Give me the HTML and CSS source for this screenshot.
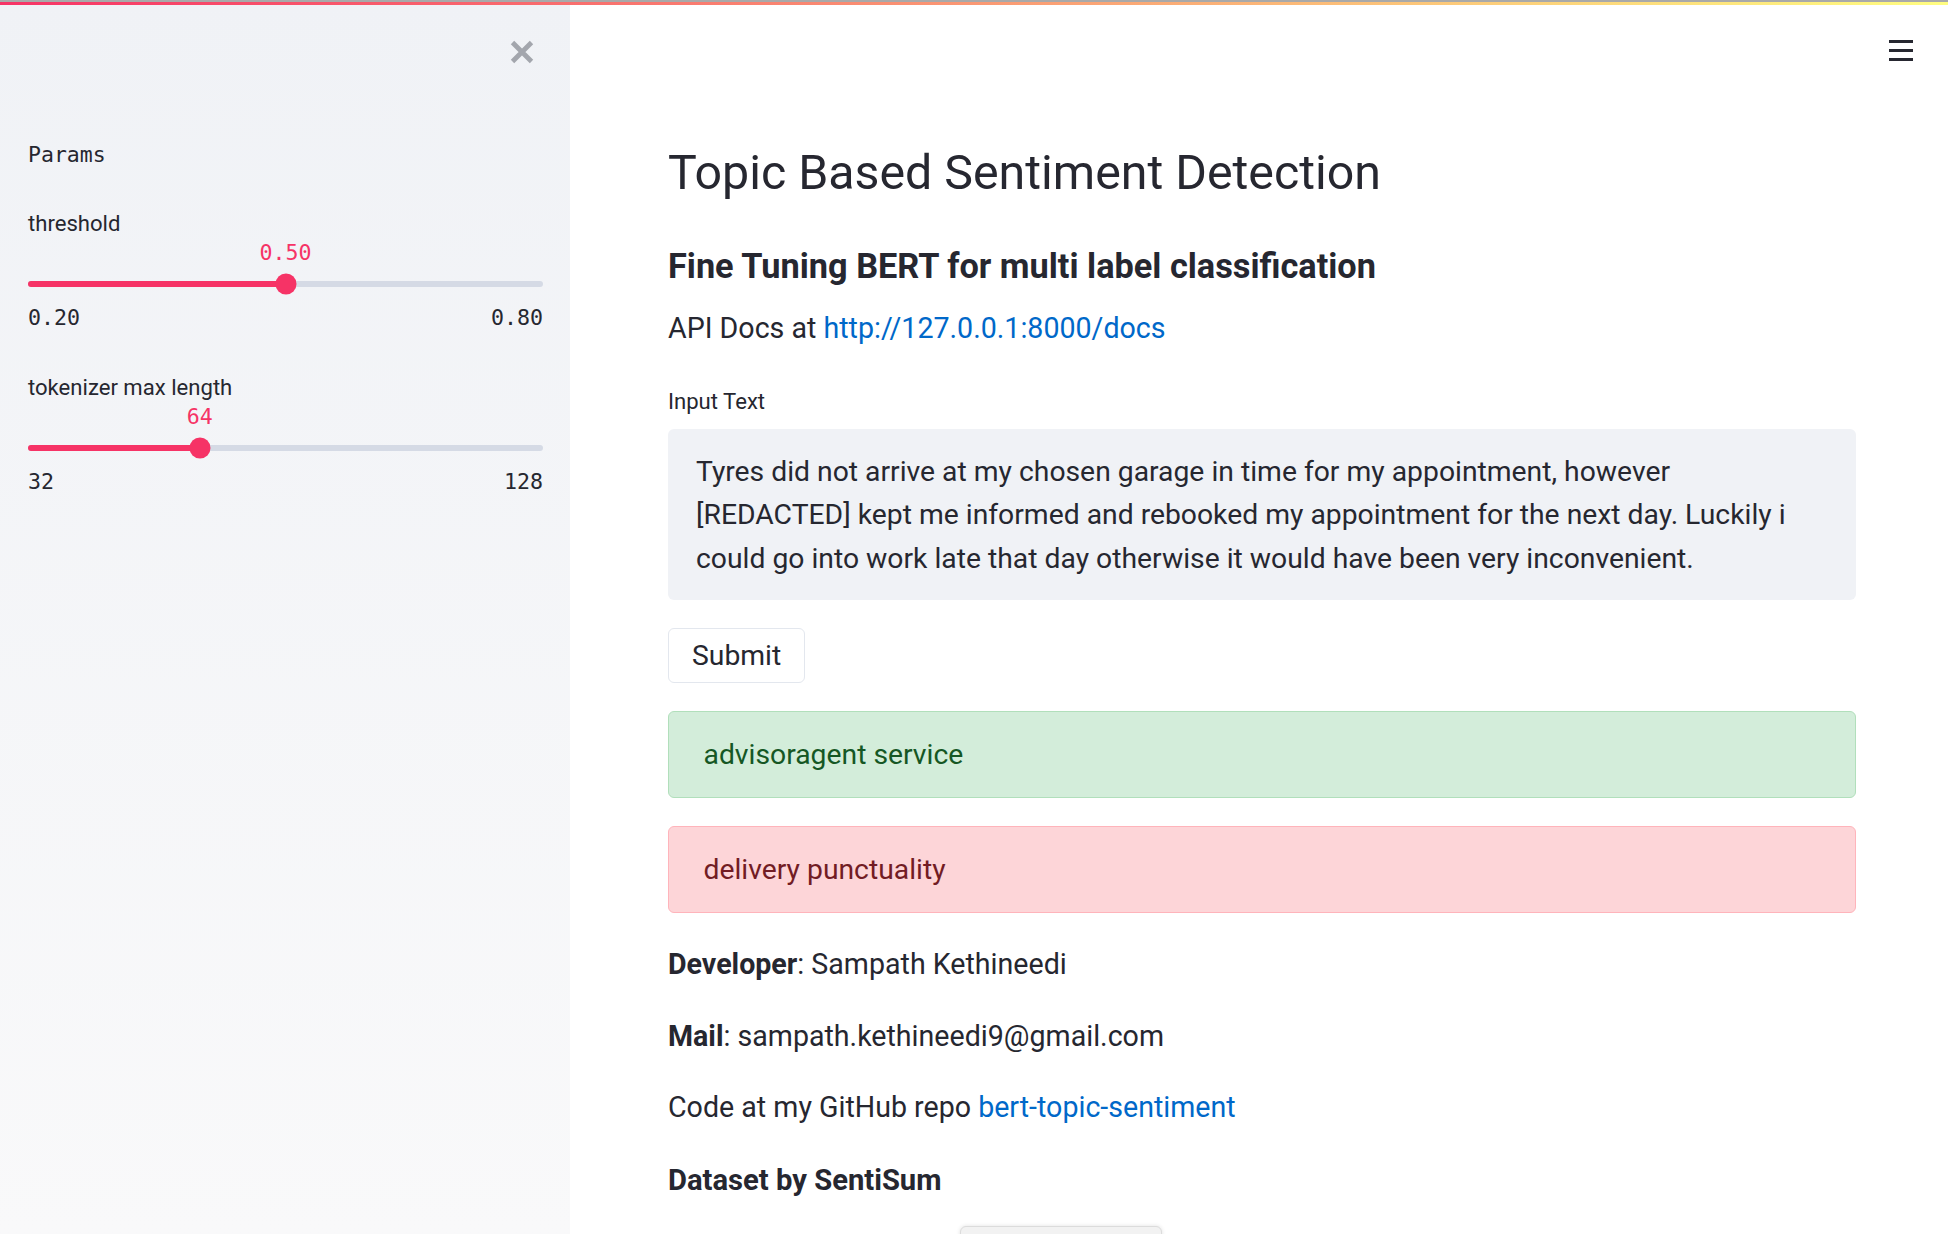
FILE: index.html
```html
<!DOCTYPE html>
<html lang="en">
<head>
<meta charset="utf-8">
<title>Topic Based Sentiment Detection</title>
<link rel="stylesheet" href="styles.css">
</head>
<body>
<div class="decoration"></div>
<div class="app">
  <aside class="sidebar">
    <button class="close" aria-label="Close sidebar">
      <svg viewBox="0 0 24 24" width="24" height="24"><path d="M2.5 2.5 L21.5 21.5 M21.5 2.5 L2.5 21.5" stroke="#a3a6ad" stroke-width="4.8" fill="none"/></svg>
    </button>
    <div class="params">Params</div>

    <div class="slider-group">
      <div class="slider-label">threshold</div>
      <div class="slider">
        <div class="slider-value-row"><span class="slider-value" style="left:50%">0.50</span></div>
        <div class="track"><div class="fill" style="width:50%"></div><div class="thumb" style="left:50%"></div></div>
        <div class="minmax"><span>0.20</span><span>0.80</span></div>
      </div>
    </div>

    <div class="slider-group">
      <div class="slider-label">tokenizer max length</div>
      <div class="slider">
        <div class="slider-value-row"><span class="slider-value" style="left:33.33%">64</span></div>
        <div class="track"><div class="fill" style="width:33.33%"></div><div class="thumb" style="left:33.33%"></div></div>
        <div class="minmax"><span>32</span><span>128</span></div>
      </div>
    </div>
  </aside>

  <main class="main">
    <button class="menu" aria-label="Menu">
      <svg viewBox="0 0 24 21" width="24" height="21"><rect x="0" y="0" width="24" height="3" fill="#262730"/><rect x="0" y="9" width="24" height="3" fill="#262730"/><rect x="0" y="18" width="24" height="3" fill="#262730"/></svg>
    </button>
    <div class="block">
      <h1 class="title">Topic Based Sentiment Detection</h1>
      <h3 class="subtitle">Fine Tuning BERT for multi label classification</h3>
      <p class="api">API Docs at <a href="#">http://127.0.0.1:8000/docs</a></p>
      <div class="field-label">Input Text</div>
      <div class="textarea">Tyres did not arrive at my chosen garage in time for my appointment, however<br>[REDACTED] kept me informed and rebooked my appointment for the next day. Luckily i<br>could go into work late that day otherwise it would have been very inconvenient.</div>
      <button class="submit">Submit</button>
      <div class="alert alert-success">advisoragent service</div>
      <div class="alert alert-error">delivery punctuality</div>
      <p class="para first"><strong>Developer</strong>: Sampath Kethineedi</p>
      <p class="para"><strong>Mail</strong>: sampath.kethineedi9@gmail.com</p>
      <p class="para">Code at my GitHub repo <a href="#">bert-topic-sentiment</a></p>
      <p class="para dataset"><strong>Dataset by SentiSum</strong></p>
      <div class="dataset-card"></div>
    </div>
  </main>
</div>
</body>
</html>
```
FILE: styles.css
```css
* { box-sizing: border-box; }

html, body {
  margin: 0;
  height: 100%;
  overflow: hidden;
}

body {
  font-family: Roboto, "Liberation Sans", sans-serif;
  color: #262730;
  background: #ffffff;
}

.decoration {
  position: fixed;
  top: 0;
  left: 0;
  right: 0;
  height: 5px;
  border-top: 2px solid #a9a9a9;
  background: linear-gradient(90deg, #f63366, #fffd80);
  z-index: 10;
}

.app {
  display: flex;
  height: 100vh;
}

/* ---------- Sidebar ---------- */
.sidebar {
  width: 570px;
  flex: none;
  position: relative;
  background: linear-gradient(180deg, #f0f2f6, #f9f9fa);
  padding: 139px 27px 0 28px;
}

.close {
  position: absolute;
  left: 510px;
  top: 40px;
  width: 24px;
  height: 24px;
  padding: 0;
  border: 0;
  background: none;
}

.close svg { display: block; }

.params {
  font-family: "DejaVu Sans Mono", "Liberation Mono", monospace;
  font-size: 21.5px;
  line-height: 32px;
  margin-bottom: 39px;
}

.slider-group + .slider-group { margin-top: 43.5px; }

.slider-label {
  font-size: 22.1px;
  line-height: 26.5px;
}

.slider { margin-top: 3.5px; }

.slider-value-row {
  position: relative;
  height: 26px;
}

.slider-value {
  position: absolute;
  top: 0;
  transform: translateX(-50%);
  font-family: "DejaVu Sans Mono", "Liberation Mono", monospace;
  font-size: 21.6px;
  line-height: 26px;
  color: #f63366;
}

.track {
  position: relative;
  margin-top: 14.5px;
  height: 6px;
  border-radius: 3px;
  background: #d5dae5;
}

.fill {
  height: 100%;
  border-radius: 3px;
  background: #f63366;
}

.thumb {
  position: absolute;
  top: 50%;
  width: 21px;
  height: 21px;
  border-radius: 50%;
  background: #f63366;
  transform: translate(-50%, -50%);
}

.minmax {
  display: flex;
  justify-content: space-between;
  margin-top: 18px;
  font-family: "DejaVu Sans Mono", "Liberation Mono", monospace;
  font-size: 21.6px;
  line-height: 26px;
}

/* ---------- Main ---------- */
.main {
  flex: 1;
  position: relative;
  padding: 143.5px 0 0 98px;
}

.menu {
  position: absolute;
  left: 1319px;
  top: 40px;
  width: 24px;
  height: 21px;
  padding: 0;
  border: 0;
  background: none;
}

.menu svg { display: block; }

.block { width: 1188px; }

.title {
  margin: 0;
  font-size: 48.3px;
  font-weight: 400;
  line-height: 58px;
}

.subtitle {
  margin: 44.5px 0 0;
  font-size: 34.3px;
  font-weight: 700;
  line-height: 41px;
}

.api {
  margin: 19.6px 0 0;
  font-size: 28.6px;
  line-height: 43.5px;
}

a {
  color: #0068c9;
  text-decoration: none;
}

.field-label {
  margin-top: 37.9px;
  font-size: 22.1px;
  line-height: 26.5px;
}

.textarea {
  margin-top: 14.5px;
  padding: 21px 28px 20px;
  background: #f0f2f6;
  border-radius: 6px;
  font-size: 28.3px;
  line-height: 43.5px;
  white-space: nowrap;
}

.submit {
  display: block;
  margin-top: 27.5px;
  padding: 4.75px 23px;
  border: 1px solid #e3e7ee;
  border-radius: 6px;
  background: #ffffff;
  font-family: inherit;
  font-size: 28.3px;
  line-height: 43.5px;
  color: #262730;
}

.alert {
  margin-top: 28px;
  padding: 20.75px 34.5px;
  border: 1.5px solid;
  border-radius: 6px;
  font-size: 28.3px;
  line-height: 43.5px;
}

.alert-success {
  background: #d3edda;
  border-color: #b1dfbb;
  color: #155724;
}

.alert-error {
  background: #fdd5d8;
  border-color: #ffb4bb;
  color: #721c24;
}

.para {
  margin: 28px 0 0;
  font-size: 28.6px;
  line-height: 43.5px;
}

.para.first { margin-top: 30.5px; }

.para.dataset {
  margin-top: 29px;
  font-size: 29.2px;
}

.para strong { font-weight: 700; }

.dataset-card {
  margin: 24px 0 0 292px;
  width: 202px;
  height: 60px;
  border: 1px solid #dcdcdc;
  border-radius: 6px;
  background: #f2f2f2;
  box-shadow: 0 0 4px rgba(0, 0, 0, 0.12);
}
```
